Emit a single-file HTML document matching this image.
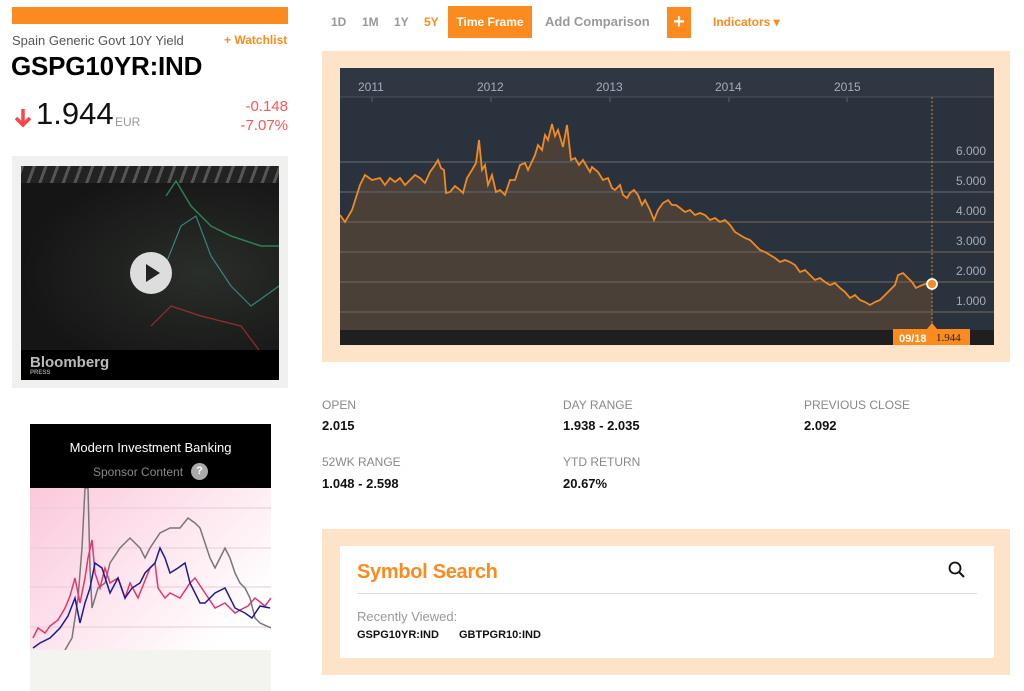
<!DOCTYPE html>
<html><head><meta charset="utf-8"><style>
*{margin:0;padding:0;box-sizing:border-box}
body{width:1024px;height:691px;background:#fff;font-family:"Liberation Sans",sans-serif;position:relative;overflow:hidden}
.a{position:absolute}
.lab{font-size:12px;color:#888}
.val{font-size:13px;color:#111;font-weight:bold}
</style></head><body>
<div class="a" style="left:12px;top:7px;width:276px;height:17px;background:#fb8b1e"></div>
<div class="a" style="left:12px;top:33px;font-size:13px;color:#555">Spain Generic Govt 10Y Yield</div>
<div class="a" style="left:224px;top:33px;font-size:12px;color:#fb8b1e;font-weight:bold">+ Watchlist</div>
<div class="a" style="left:11px;top:51px;font-size:26px;font-weight:bold;color:#000;letter-spacing:-0.2px">GSPG10YR:IND</div>
<svg class="a" style="left:13px;top:107px" width="20" height="22"><path d="M10 2V18M3 11L10 18L17 11" stroke="#f44" stroke-width="3.5" fill="none"/></svg>
<div class="a" style="left:36px;top:96px;font-size:31px;color:#111">1.944</div>
<div class="a" style="left:115px;top:115px;font-size:12px;color:#999">EUR</div>
<div class="a" style="right:736px;top:97px;font-size:15px;color:#f55;text-align:right;line-height:19px">-0.148<br>-7.07%</div>

<div class="a" style="left:12px;top:156px;width:276px;height:232px;background:#f0f0ee"></div>
<div class="a" style="left:21px;top:166px;width:258px;height:214px;background:radial-gradient(ellipse at 70% 50%,#2a2e2a,#151515 70%)">
<div class="a" style="left:0;top:0;width:258px;height:17px;background:repeating-linear-gradient(110deg,#555 0 3px,#222 3px 11px)"></div>
<svg class="a" style="left:0;top:0" width="258" height="214"><polyline points="145,30 155,15 170,40 190,60 210,70 240,80 258,80" stroke="#3a6" stroke-width="1.5" fill="none" opacity=".7"/><polyline points="140,110 160,60 175,50 190,90 210,120 230,140 258,120" stroke="#4aa" stroke-width="1.2" fill="none" opacity=".7"/><polyline points="130,160 150,140 180,150 220,160 250,200" stroke="#c33" stroke-width="1.2" fill="none" opacity=".7"/></svg>
<div class="a" style="left:109px;top:86px;width:42px;height:42px;border-radius:50%;background:#ddd"></div>
<svg class="a" style="left:109px;top:86px" width="42" height="42"><path d="M16 12L30 21L16 30Z" fill="#222"/></svg>
<div class="a" style="left:0;top:184px;width:258px;height:30px;background:#000"></div>
<div class="a" style="left:9px;top:188px;font-size:15px;color:#bbb;font-weight:bold">Bloomberg</div>
<div class="a" style="left:9px;top:204px;font-size:6px;color:#999;font-weight:bold">PRESS</div>
</div>

<div class="a" style="left:30px;top:424px;width:241px;height:64px;background:#000"></div>
<div class="a" style="left:30px;top:440px;width:241px;text-align:center;font-size:13px;color:#fff">Modern Investment Banking</div>
<div class="a" style="left:93px;top:465px;font-size:12px;color:#888">Sponsor Content</div>
<div class="a" style="left:191px;top:463px;width:17px;height:17px;border-radius:50%;background:#aaa;color:#fff;font-size:11px;font-weight:bold;text-align:center;line-height:17px">?</div>
<div class="a" style="left:30px;top:488px;width:241px;height:162px;background:linear-gradient(135deg,#fbc8dc,#fff 85%)"></div>
<svg class="a" style="left:30px;top:488px" width="241" height="162"><g stroke="#e6ccd6" stroke-width="1"><line x1="0" y1="20" x2="241" y2="20"/><line x1="0" y1="60" x2="241" y2="60"/><line x1="0" y1="99" x2="241" y2="99"/><line x1="0" y1="139" x2="241" y2="139"/></g>
<polyline points="35,162 42,150 48,110 52,60 55,0 58,0 60,80 62,120 68,100 75,95 80,75 90,60 100,50 110,60 115,70 120,60 130,45 140,40 150,40 158,30 165,35 170,40 180,70 185,80 190,70 195,60 200,70 205,85 210,95 215,100 220,110 225,130 230,135 241,140" stroke="#777" stroke-width="1.5" fill="none"/>
<polyline points="3,150 8,140 15,145 20,138 28,132 35,120 40,108 45,90 50,115 55,90 58,70 62,52 65,85 70,100 75,80 80,95 88,90 95,110 100,95 108,110 120,80 125,75 128,100 135,110 140,105 150,110 160,95 165,90 175,105 185,120 195,115 205,125 210,122 218,118 225,110 235,118 241,110" stroke="#e8336c" stroke-width="1.5" fill="none"/>
<polyline points="3,160 10,155 20,150 30,140 38,128 45,110 50,135 55,115 60,100 65,75 72,80 80,105 88,90 95,110 102,100 110,95 115,85 125,75 130,60 135,70 140,85 148,80 155,75 160,95 170,115 175,115 185,105 195,100 205,120 215,125 222,130 230,118 240,120" stroke="#1a1a99" stroke-width="1.5" fill="none"/></svg>
<div class="a" style="left:30px;top:650px;width:241px;height:41px;background:#f3f3f0"></div>

<div class="a" style="left:331px;top:15px;font-size:12px;color:#999;font-weight:bold">1D</div>
<div class="a" style="left:362px;top:15px;font-size:12px;color:#999;font-weight:bold">1M</div>
<div class="a" style="left:394px;top:15px;font-size:12px;color:#999;font-weight:bold">1Y</div>
<div class="a" style="left:424px;top:15px;font-size:12px;color:#fb8b1e;font-weight:bold">5Y</div>
<div class="a" style="left:448px;top:6px;width:84px;height:32px;background:#fb8b1e;color:#fff;font-size:12px;font-weight:bold;text-align:center;line-height:32px">Time Frame</div>
<div class="a" style="left:545px;top:14px;font-size:13px;color:#999;font-weight:bold">Add Comparison</div>
<div class="a" style="left:667px;top:7px;width:24px;height:31px;background:#fb8b1e;color:#fff;font-size:20px;font-weight:bold;text-align:center;line-height:31px">+</div>
<div class="a" style="left:713px;top:15px;font-size:12px;color:#fb8b1e;font-weight:bold">Indicators ▾</div>

<div class="a" style="left:322px;top:51px;width:688px;height:311px;background:#fde3c8"></div>
<svg class="a" style="left:340px;top:68px" width="654" height="277">
<rect width="654" height="277" fill="#2a323d"/>
<rect y="0" width="654" height="29" fill="#2f3742"/>
<line x1="0" y1="29" x2="654" y2="29" stroke="#4a525c"/>
<g stroke="#5a626c"><line x1="32" y1="29" x2="32" y2="34"/><line x1="151" y1="29" x2="151" y2="34"/><line x1="270" y1="29" x2="270" y2="34"/><line x1="389" y1="29" x2="389" y2="34"/><line x1="507" y1="29" x2="507" y2="34"/></g>
<g fill="#aab" font-size="12" font-family="Liberation Sans"><text x="18" y="23">2011</text><text x="137" y="23">2012</text><text x="256" y="23">2013</text><text x="375" y="23">2014</text><text x="494" y="23">2015</text>
<text x="616" y="87">6.000</text><text x="616" y="117">5.000</text><text x="616" y="147">4.000</text><text x="616" y="177">3.000</text><text x="616" y="207">2.000</text><text x="616" y="237">1.000</text></g>
<polygon fill="#4a4038" points="0,147 5,154 12,142 20,117 25,107 32,112 40,110 45,117 50,110 55,114 60,110 65,117 70,112 75,107 80,110 85,115 90,104 95,97 98,92 101,100 104,102 106,125 110,124 115,118 120,122 123,125 127,110 132,102 136,95 139,72 142,102 145,97 148,117 152,107 156,124 160,122 165,127 170,112 175,112 180,97 185,95 188,102 195,87 198,77 202,82 205,67 208,72 212,56 215,68 218,62 223,79 227,57 231,92 235,90 239,97 243,92 250,104 252,99 258,104 263,112 268,110 272,120 275,122 280,117 283,127 287,130 290,125 294,122 298,127 302,137 305,132 310,142 314,152 318,142 323,135 328,132 332,137 336,137 340,140 345,144 350,142 355,147 360,145 365,147 370,152 375,150 380,154 385,152 390,157 395,164 400,167 405,170 410,172 415,177 420,182 425,184 430,187 435,190 440,194 445,192 450,194 455,197 460,204 465,202 470,207 475,212 480,210 485,214 490,217 495,215 500,220 505,224 510,230 515,227 520,232 525,234 530,237 535,234 540,232 545,227 550,222 555,217 558,207 563,205 568,210 572,214 576,220 580,218 585,216 592,216 592,262 0,262"/>
<g stroke="#6a6058" stroke-width="1.2"><line x1="0" y1="154" x2="654" y2="154"/><line x1="0" y1="184" x2="654" y2="184"/><line x1="0" y1="214" x2="654" y2="214"/><line x1="0" y1="244" x2="654" y2="244"/></g>
<g stroke="#5a626c" stroke-width="1.2"><line x1="0" y1="94" x2="654" y2="94"/><line x1="0" y1="124" x2="654" y2="124"/></g>
<polyline fill="none" stroke="#f08a24" stroke-width="1.8" points="0,147 5,154 12,142 20,117 25,107 32,112 40,110 45,117 50,110 55,114 60,110 65,117 70,112 75,107 80,110 85,115 90,104 95,97 98,92 101,100 104,102 106,125 110,124 115,118 120,122 123,125 127,110 132,102 136,95 139,72 142,102 145,97 148,117 152,107 156,124 160,122 165,127 170,112 175,112 180,97 185,95 188,102 195,87 198,77 202,82 205,67 208,72 212,56 215,68 218,62 223,79 227,57 231,92 235,90 239,97 243,92 250,104 252,99 258,104 263,112 268,110 272,120 275,122 280,117 283,127 287,130 290,125 294,122 298,127 302,137 305,132 310,142 314,152 318,142 323,135 328,132 332,137 336,137 340,140 345,144 350,142 355,147 360,145 365,147 370,152 375,150 380,154 385,152 390,157 395,164 400,167 405,170 410,172 415,177 420,182 425,184 430,187 435,190 440,194 445,192 450,194 455,197 460,204 465,202 470,207 475,212 480,210 485,214 490,217 495,215 500,220 505,224 510,230 515,227 520,232 525,234 530,237 535,234 540,232 545,227 550,222 555,217 558,207 563,205 568,210 572,214 576,220 580,218 585,216 592,216"/>
<line x1="592" y1="29" x2="592" y2="262" stroke="#d08a30" stroke-dasharray="2,2"/>
<rect y="262" width="654" height="15" fill="#1f1f1f"/>
<circle cx="592" cy="216" r="5" fill="#f08a24" stroke="#fff" stroke-width="1.8"/>
<path d="M587 261L592 255L597 261Z" fill="#fb8b1e"/>
<rect x="553" y="261" width="77" height="16" fill="#fb8b1e"/>
<text x="559" y="274" fill="#fff" font-size="11" font-family="Liberation Sans" font-weight="bold">09/18</text>
<text x="596" y="273" fill="#222" font-size="11" font-family="Liberation Serif">1.944</text>
</svg>

<div class="a lab" style="left:322px;top:398px">OPEN</div>
<div class="a val" style="left:322px;top:418px">2.015</div>
<div class="a lab" style="left:563px;top:398px">DAY RANGE</div>
<div class="a val" style="left:563px;top:418px">1.938 - 2.035</div>
<div class="a lab" style="left:804px;top:398px">PREVIOUS CLOSE</div>
<div class="a val" style="left:804px;top:418px">2.092</div>
<div class="a lab" style="left:322px;top:455px">52WK RANGE</div>
<div class="a val" style="left:322px;top:476px">1.048 - 2.598</div>
<div class="a lab" style="left:563px;top:455px">YTD RETURN</div>
<div class="a val" style="left:563px;top:476px">20.67%</div>

<div class="a" style="left:322px;top:529px;width:688px;height:146px;background:#fde3c8"></div>
<div class="a" style="left:340px;top:546px;width:654px;height:112px;background:#fff"></div>
<div class="a" style="left:357px;top:561px;font-size:20px;font-weight:bold;color:#fb8b1e;letter-spacing:-0.3px">Symbol Search</div>
<svg class="a" style="left:947px;top:560px" width="20" height="20"><circle cx="8" cy="8" r="5.5" stroke="#111" stroke-width="1.8" fill="none"/><path d="M12 12L17 17" stroke="#111" stroke-width="2"/></svg>
<div class="a" style="left:357px;top:593px;width:620px;height:1px;background:#ddd"></div>
<div class="a" style="left:357px;top:609px;font-size:13px;color:#999">Recently Viewed:</div>
<div class="a" style="left:357px;top:629px;font-size:11px;font-weight:bold;color:#111">GSPG10YR:IND</div>
<div class="a" style="left:459px;top:629px;font-size:11px;font-weight:bold;color:#111">GBTPGR10:IND</div>
</body></html>
